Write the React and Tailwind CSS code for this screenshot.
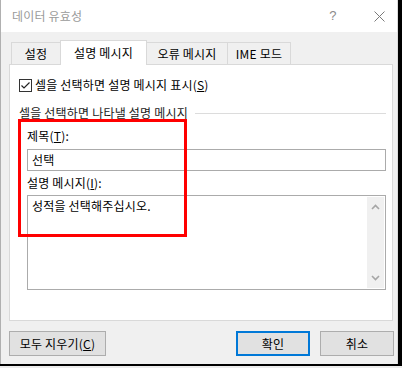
export default function App() {
  const tab = "flex items-center justify-center border border-b-0 border-[#d9d9d9] text-[12px] leading-[16px]";
  const btn = "h-[25px] flex items-center justify-center bg-[#e1e1e1] text-[12px] leading-[16px] text-black";
  return (
    <div className="relative w-[402px] h-[368px] bg-[#ececec] flex flex-col overflow-hidden font-['Noto_Sans_CJK_KR','Noto_Sans',sans-serif] text-[12px] tracking-[0.2px] text-black">
      <div className="flex h-[364px] shrink-0">
        <div className="w-[398px] h-full flex flex-col border-l border-[#b0b0b0] border-r border-r-[#dcdcdc] bg-[#f0f0f0]">
          {/* title bar */}
          <div className="h-[32px] shrink-0 bg-white flex items-center pl-[11px]">
            <span className="text-[#9a9a9a] text-[12px] leading-[16px]">데이터 유효성</span>
            <span className="ml-auto w-[24px] flex justify-center text-[#8a8a8a] text-[13px] leading-[16px] font-['Liberation_Sans',sans-serif]">?</span>
            <span className="ml-[22px] mr-[6px] w-[24px] flex justify-center">
              <svg width="11" height="11" viewBox="0 0 11 11">
                <path d="M0.5 0.5 L10.5 10.5 M10.5 0.5 L0.5 10.5" stroke="#7a7a7a" strokeWidth="1" fill="none" />
              </svg>
            </span>
          </div>

          {/* body */}
          <div className="flex flex-col pl-[8px]">
            {/* tabs */}
            <div className="mt-[8px] h-[24px] flex items-end ml-[2px]">
              <div className={`${tab} w-[50px] h-[22px] bg-[#f0f0f0]`}>설정</div>
              <div className={`${tab} -ml-px w-[87px] h-[25px] -mb-px bg-white relative z-10`}>설명 메시지</div>
              <div className={`${tab} -ml-px w-[82px] h-[22px] bg-[#f0f0f0]`}>오류 메시지</div>
              <div className={`${tab} -ml-px w-[64px] h-[22px] bg-[#f0f0f0]`}>IME 모드</div>
            </div>

            {/* panel */}
            <div className="w-[384px] h-[257px] border border-[#d9d9d9] bg-white flex flex-col pl-[9px] pt-[12px]">
              <div className="h-[16px] flex items-center">
                <span className="w-[13px] h-[13px] border border-[#333333] bg-white flex items-center justify-center">
                  <svg width="11" height="11" viewBox="0 0 11 11">
                    <path d="M1.5 5.5 L4 8 L9.5 2.5" stroke="#222222" strokeWidth="1.2" fill="none" />
                  </svg>
                </span>
                <span className="ml-[3px] leading-[16px]">셀을 선택하면 설명 메시지 표시(<span className="underline">S</span>)</span>
              </div>

              <div className="mt-[12px] h-[16px] flex items-center">
                <span className="leading-[16px] text-[#1a1a1a]">셀을 선택하면 나타낼 설명 메시지</span>
                <div className="flex-1 h-px bg-[#dcdcdc] ml-[7px] mr-[6px]" />
              </div>

              <div className="ml-[8px] mr-[6px] flex flex-col">
                <div className="mt-[7px] h-[16px] flex items-center leading-[16px]">제목(<span className="underline">T</span>):</div>
                <div className="mt-[5px] h-[22px] border border-[#ababab] bg-white flex items-center pl-[4px] leading-[16px]">선택</div>
                <div className="mt-[4px] h-[16px] flex items-center leading-[16px]">설명 메시지(<span className="underline">I</span>):</div>
                <div className="mt-[4px] h-[95px] border border-[#ababab] bg-white flex p-[1px]">
                  <div className="flex-1 pl-[3px] pt-[1px] leading-[16px]">성적을 선택해주십시오.</div>
                  <div className="w-[17px] bg-[#f0f0f0] flex flex-col justify-between">
                    <div className="h-[17px] flex items-center justify-center pt-[3px]">
                      <svg width="9" height="6" viewBox="0 0 9 6">
                        <path d="M1 5 L4.5 1.5 L8 5" stroke="#a6a6a6" strokeWidth="1.6" fill="none" />
                      </svg>
                    </div>
                    <div className="h-[17px] flex items-center justify-center pb-[3px]">
                      <svg width="9" height="6" viewBox="0 0 9 6">
                        <path d="M1 1 L4.5 4.5 L8 1" stroke="#a6a6a6" strokeWidth="1.6" fill="none" />
                      </svg>
                    </div>
                  </div>
                </div>
              </div>
            </div>

            {/* buttons */}
            <div className="mt-[10px] flex items-center mr-[3px]">
              <div className={`${btn} w-[97px] border border-[#adadad]`}>모두 지우기(<span className="underline">C</span>)</div>
              <div className={`${btn} ml-auto w-[74px] border-2 border-[#0078d7]`}>확인</div>
              <div className={`${btn} ml-[10px] w-[74px] border border-[#adadad]`}>취소</div>
            </div>
          </div>
        </div>
        <div className="flex-1 bg-black" />
      </div>
      <div className="h-[2px] bg-black shrink-0" />
      <div className="flex-1 bg-[#ececec]" />

      {/* red annotation */}
      <div className="absolute left-[18px] top-[119px] w-[169px] h-[118px] border-[3px] border-[#ff0000] pointer-events-none" />
    </div>
  );
}
